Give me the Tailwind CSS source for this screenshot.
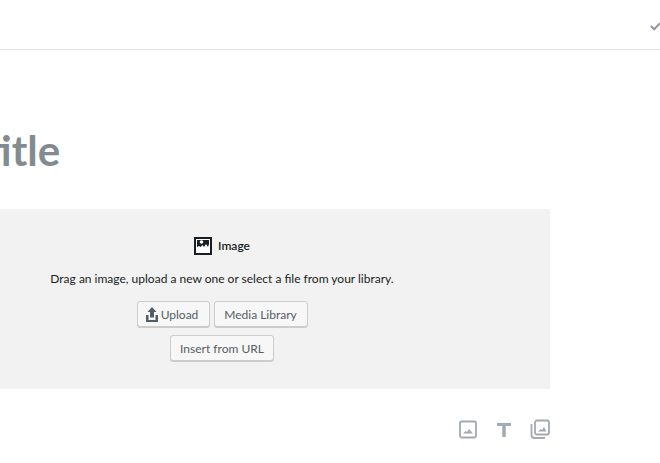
<!DOCTYPE html>
<html lang="en">
<head>
  <meta charset="UTF-8" />
  <title>Add title</title>
  <script src="https://cdn.jsdelivr.net/npm/@tailwindcss/browser@4"></script>
</head>
<body class="bg-white h-[463px] w-[660px] overflow-hidden font-['Lato',sans-serif]">
  <header class="h-[50px] border-b border-[#e2e4e7] flex items-center justify-end">
    <svg class="w-[11px] h-[11px] mr-[-1px] mt-[3px]" viewBox="0 0 12 12" fill="none" stroke="#8f98a1" stroke-width="2.2"><path d="M1 5.5 L4.5 9 L11 2.5"/></svg>
  </header>

  <main class="w-[656px] ml-[-106px]">
    <h1 class="h-[159px] pt-[71px] pl-[4px] text-[42px] leading-[58px] font-bold text-[#828a92]">Add title</h1>

    <section class="h-[180px] bg-[#f2f2f2] flex flex-col items-center pt-[27px]">
      <div class="flex items-center h-[20px] text-[12px] font-semibold text-[#191e23]">
        <svg class="w-[18px] h-[18px] mr-[4px]" viewBox="0 0 18 18">
          <rect x="1" y="1" width="16" height="16" fill="#fff" stroke="#191e23" stroke-width="2"/>
          <path d="M3 3h12v4l-1 3-2-3-2 3-1.500-2-2 2-1.500-1-2 1z" fill="#191e23"/>
          <circle cx="7.500" cy="5" r="1.800" fill="#fff"/>
        </svg>
        <span class="ml-[2px]">Image</span>
      </div>
      <p class="mt-[14px] text-[12px] leading-[18px] text-[#191e23]">Drag an image, upload a new one or select a file from your library.</p>
      <div class="mt-[13px] flex gap-[4px]">
        <button class="h-[26px] w-[73px] pr-[4px] pt-[1px] flex items-center justify-center text-[12px] text-[#555d66] bg-[#f7f7f7] border border-[#ccc] rounded-[3px] shadow-[0_1px_0_#ccc]">
          <svg class="w-[16px] h-[18px] mr-[1px]" viewBox="0 0 16 18" fill="#555d66"><path d="M8 1 L12.500 6 H10 V11.500 H6 V6 H3.500 Z"/><path d="M2 9 H4.500 V14 H11.500 V9 H14 V16 H2 Z"/></svg>
          Upload
        </button>
        <button class="h-[26px] w-[94px] pt-[1px] text-[12px] text-[#555d66] bg-[#f7f7f7] border border-[#ccc] rounded-[3px] shadow-[0_1px_0_#ccc]">Media Library</button>
      </div>
      <button class="mt-[8px] h-[26px] w-[104px] pt-[1px] text-[12px] text-[#555d66] bg-[#f7f7f7] border border-[#ccc] rounded-[3px] shadow-[0_1px_0_#ccc]">Insert from URL</button>
    </section>

    <div class="mt-[30px] flex justify-end gap-[16px] items-center text-[#a2aab2]">
      <svg class="w-[20px] h-[20px]" viewBox="0 0 20 20" fill="none"><rect x="2" y="2.500" width="16" height="16" rx="1.500" stroke="#a2aab2" stroke-width="1.800"/><path d="M5 14.500 L7.500 12 L9 13 L11 10 L15 14.500 Z" fill="#a2aab2"/></svg>
      <svg class="w-[20px] h-[20px]" viewBox="0 0 20 20" fill="#a2aab2"><path d="M3 4 H17 V7 H11.700 V18 H8.300 V7 H3 Z"/></svg>
      <svg class="w-[20px] h-[20px]" viewBox="0 0 20 20" fill="none"><rect x="5" y="1.500" width="14" height="14" rx="2" stroke="#a2aab2" stroke-width="1.800"/><path d="M1.500 5 V16 Q1.500 19 4.500 19 H15" stroke="#a2aab2" stroke-width="1.800"/><path d="M8 12.500 L10.500 10 L12 11 L14 8 L16.500 12.500 Z" fill="#a2aab2"/></svg>
    </div>
  </main>
</body>
</html>
